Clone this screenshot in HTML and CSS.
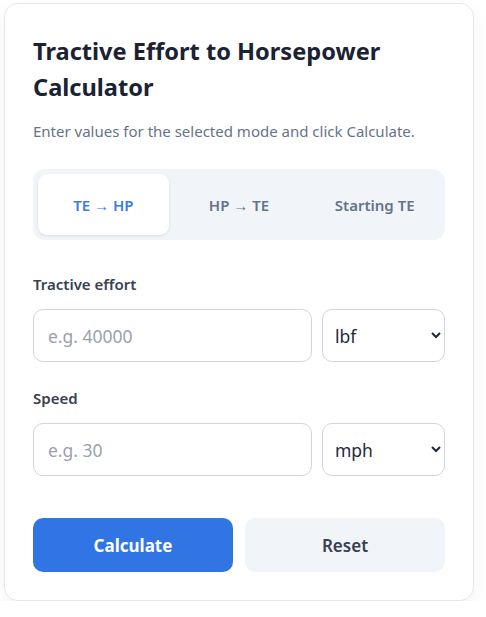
FILE: index.html
```html
<!DOCTYPE html>
<html lang="en">
<head>
    <meta charset="UTF-8">
    <meta name="viewport" content="width=device-width, initial-scale=1.0">
    <title>Tractive Effort to Horsepower Calculator</title>
    <link rel="stylesheet" href="styles.css">
</head>
<body>

    <div class="card">
        <h1>Tractive Effort to Horsepower Calculator</h1>
        <p class="subtitle">Enter values for the selected mode and click Calculate.</p>

        <!-- Mode tabs -->
        <div class="tabs">
            <button class="tab active">TE &rarr; HP</button>
            <button class="tab">HP &rarr; TE</button>
            <button class="tab">Starting TE</button>
        </div>

        <div class="field">
            <label for="effort">Tractive effort</label>
            <div class="field-row">
                <input type="text" id="effort" placeholder="e.g. 40000">
                <select id="effortUnit">
                    <option>lbf</option>
                    <option>kN</option>
                </select>
            </div>
        </div>

        <div class="field">
            <label for="speed">Speed</label>
            <div class="field-row">
                <input type="text" id="speed" placeholder="e.g. 30">
                <select id="speedUnit">
                    <option>mph</option>
                    <option>km/h</option>
                </select>
            </div>
        </div>

        <div class="button-group">
            <button class="primary">Calculate</button>
            <button class="secondary">Reset</button>
        </div>
    </div>

</body>
</html>
```

FILE: styles.css
```css
body {
    font-family: "Noto Sans", "Open Sans", Arial, sans-serif;
    margin: 0;
    padding: 3px 12px 0 4px;
    background-color: #fff;
    color: #1e293b;
}
.card {
    background-color: white;
    border: 1px solid #e2e8f0;
    border-radius: 14px;
    padding: 29px 28px 28px 28px;
    box-shadow: 0 8px 20px rgba(15, 23, 42, 0.05);
}
h1 {
    margin: 0;
    font-size: 23.6px;
    line-height: 36px;
    font-weight: 700;
    color: #1a2233;
}
.subtitle {
    margin: 16px 0 28px;
    font-size: 15px;
    line-height: 20px;
    color: #64748b;
}
.tabs {
    display: flex;
    gap: 5px;
    padding: 5px;
    background-color: #f1f4f9;
    border-radius: 12px;
}
.tab {
    flex: 1;
    height: 61px;
    border: none;
    border-radius: 9px;
    background: transparent;
    font-family: inherit;
    font-size: 15px;
    font-weight: 600;
    color: #64748b;
    cursor: pointer;
}
.tab.active {
    background-color: white;
    color: #3b7be6;
    box-shadow: 0 1px 3px rgba(15, 23, 42, 0.1);
}
.field {
    margin-top: 34px;
}
.field + .field {
    margin-top: 26px;
}
.field label {
    display: block;
    margin-bottom: 15px;
    font-size: 15px;
    line-height: 20px;
    font-weight: 600;
    color: #374151;
}
.field-row {
    display: flex;
    gap: 10px;
}
.field-row input {
    flex: 1;
    min-width: 0;
    height: 53px;
    box-sizing: border-box;
    padding: 0 14px;
    font-family: inherit;
    font-size: 17.5px;
    color: #1e293b;
    border: 1px solid #cfd6e0;
    border-radius: 10px;
}
.field-row input::placeholder {
    color: #9aa1ad;
}
.field-row select {
    width: 123px;
    height: 53px;
    box-sizing: border-box;
    padding: 0 8px;
    font-family: inherit;
    font-size: 17.5px;
    color: #1e293b;
    background-color: white;
    border: 1px solid #cfd6e0;
    border-radius: 10px;
}
.button-group {
    display: flex;
    gap: 12px;
    margin-top: 42px;
}
.button-group button {
    flex: 1;
    height: 54px;
    border: none;
    border-radius: 10px;
    font-family: inherit;
    font-size: 17px;
    cursor: pointer;
}
.primary {
    background-color: #3175e4;
    color: white;
    font-weight: 700;
}
.primary:hover {
    background-color: #2563d0;
}
.secondary {
    background-color: #f1f4f9;
    color: #374151;
    font-weight: 600;
}
.secondary:hover {
    background-color: #e2e8f0;
}
```
